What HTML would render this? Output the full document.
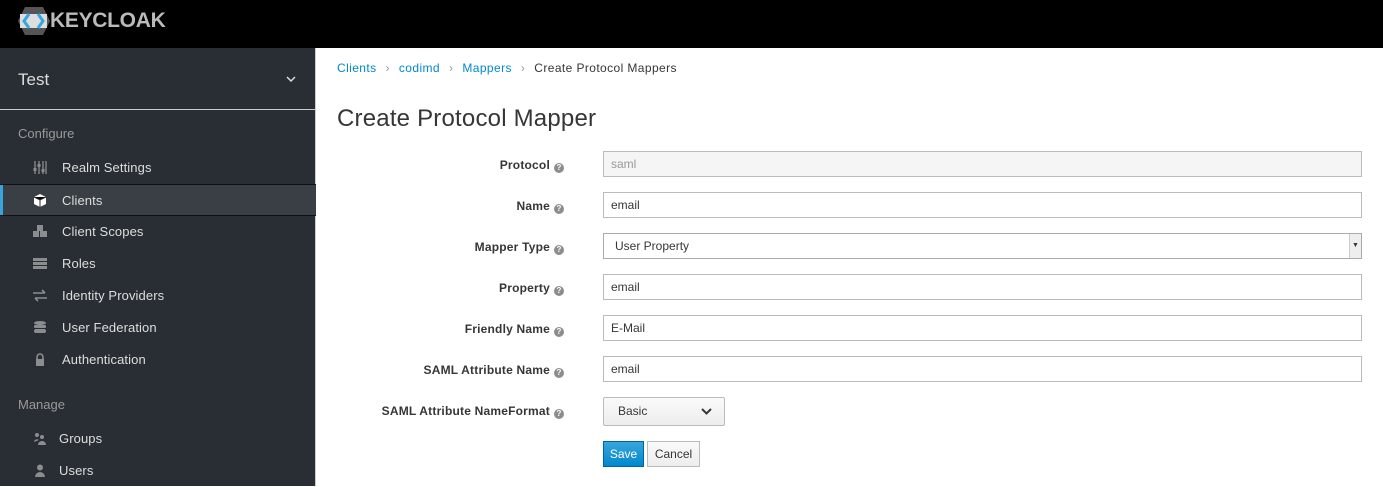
<!DOCTYPE html><html><head><style>
*{box-sizing:border-box;margin:0;padding:0}
body{width:1383px;height:486px;overflow:hidden;font-family:"Liberation Sans",sans-serif;background:#fff;position:relative}
.top{position:absolute;left:0;top:0;width:1383px;height:48px;background:#000}
.side{position:absolute;left:0;top:48px;width:316px;height:438px;background:#292e34;border-right:1px solid #ccc}
.side .realm{position:absolute;left:18px;top:22px;color:#ddd;font-size:17px}
.side .hr{position:absolute;left:0;top:61px;width:316px;height:1px;background:#ccc}
.sec{position:absolute;left:18px;color:#999;font-size:13px}
.it{position:absolute;left:0;width:316px;height:32px;color:#ddd;font-size:13px;line-height:32px;padding-left:62px;letter-spacing:0.1px}
.it.act{background:#393f44;border-top:1px solid #111;border-bottom:1px solid #111}
.it.act:before{content:"";position:absolute;left:0;top:0;width:3px;height:100%;background:#39a5dc}
.ic{position:absolute;left:33px;top:9px;width:14px;height:13px}
.bc{position:absolute;left:337px;top:61px;font-size:12px;color:#363636;letter-spacing:0.4px}
.bc a{color:#0088ce}
.bc span{color:#999;margin:0 9px}
h1{position:absolute;left:337px;top:105px;font-weight:300;font-size:24px;color:#363636;letter-spacing:0.2px}
.lab{position:absolute;right:819px;font-size:12px;font-weight:bold;color:#363636;text-align:right;white-space:nowrap;letter-spacing:0.2px}
.q{display:inline-block;width:10px;height:10px;border-radius:50%;background:#8b8d8f;color:#fff;font-size:8px;line-height:10px;text-align:center;margin-left:4px;vertical-align:-1px;letter-spacing:0}
.in{position:absolute;left:603px;width:759px;height:26px;border:1px solid #bbb;font-size:12px;line-height:24px;padding-left:7px;color:#363636}
</style></head><body>
<div class="top">
<svg style="position:absolute;left:17px;top:6px" width="34" height="30" viewBox="0 0 34 30"><polygon points="8,1 26,1 33,15 26,29 8,29 1,15" fill="#555"/><polygon points="3,8 30,8 30,22 3,22" fill="#ddd"/><path d="M12 8 L7 15 L12 22 M21 8 L26 15 L21 22" stroke="#33a8e0" stroke-width="3" fill="none"/></svg>
<div style="position:absolute;left:50px;top:9px;color:#bbb;font-weight:bold;font-size:21px;letter-spacing:-0.3px">KEYCLOAK</div>
</div>
<div class="side">
<div class="realm">Test</div>
<svg style="position:absolute;left:286px;top:28px" width="10" height="7"><path d="M1 1L5 5L9 1" stroke="#ddd" stroke-width="1.5" fill="none"/></svg>
<div class="hr"></div>
<div class="sec" style="top:78px">Configure</div>
<div class="it" style="top:104px"><svg class="ic" viewBox="0 0 14 13"><path d="M2 0v13M6 0v13M10 0v13M13 0v13" stroke="#8b8d8f" stroke-width="1.3"/><rect x="0.5" y="7" width="3" height="3" fill="#8b8d8f"/><rect x="4.5" y="3" width="3" height="3" fill="#8b8d8f"/><rect x="8.5" y="8" width="3" height="3" fill="#8b8d8f"/></svg>Realm Settings</div>
<div class="it act" style="top:136px"><svg class="ic" viewBox="0 0 14 13"><polygon points="7,0 13,3 13,10 7,13 1,10 1,3" fill="#fff"/><path d="M1 3L7 6L13 3M7 6V13" stroke="#292e34" stroke-width="1"/></svg>Clients</div>
<div class="it" style="top:168px"><svg class="ic" viewBox="0 0 14 13"><rect x="4" y="0" width="6" height="6" fill="#8b8d8f"/><rect x="0" y="6" width="6" height="6" fill="#8b8d8f"/><rect x="7" y="6" width="7" height="6" fill="#8b8d8f"/></svg>Client Scopes</div>
<div class="it" style="top:200px"><svg class="ic" viewBox="0 0 14 13"><rect y="1" width="14" height="3" fill="#8b8d8f"/><rect y="5" width="14" height="3" fill="#8b8d8f"/><rect y="9" width="14" height="3" fill="#8b8d8f"/></svg>Roles</div>
<div class="it" style="top:232px"><svg class="ic" viewBox="0 0 14 13"><path d="M0 4H12M9 1L12 4M14 9H2M5 12L2 9" stroke="#8b8d8f" stroke-width="1.6" fill="none"/></svg>Identity Providers</div>
<div class="it" style="top:264px"><svg class="ic" viewBox="0 0 14 13"><ellipse cx="7" cy="2" rx="6" ry="2" fill="#8b8d8f"/><rect x="1" y="4" width="12" height="3" rx="1" fill="#8b8d8f"/><rect x="1" y="8" width="12" height="4" rx="2" fill="#8b8d8f"/></svg>User Federation</div>
<div class="it" style="top:296px"><svg class="ic" viewBox="0 0 14 13"><path d="M4 6V4a3 3 0 0 1 6 0v2" stroke="#8b8d8f" stroke-width="1.6" fill="none"/><rect x="3" y="6" width="8" height="7" fill="#8b8d8f"/></svg>Authentication</div>
<div class="sec" style="top:349px">Manage</div>
<div class="it" style="top:375px;padding-left:59px"><svg class="ic" viewBox="0 0 14 13"><circle cx="4" cy="3" r="2" fill="#8b8d8f"/><circle cx="9" cy="5" r="2" fill="#8b8d8f"/><path d="M1 10a3 3 0 0 1 5-2M5 13a4 4 0 0 1 8 0z" fill="#8b8d8f"/></svg>Groups</div>
<div class="it" style="top:407px;padding-left:59px"><svg class="ic" viewBox="0 0 14 13"><circle cx="7" cy="3.5" r="3" fill="#8b8d8f"/><path d="M2 13a5 5 0 0 1 10 0z" fill="#8b8d8f"/></svg>Users</div>
</div>
<div class="bc"><a>Clients</a><span>›</span><a>codimd</a><span>›</span><a>Mappers</a><span>›</span>Create Protocol Mappers</div>
<h1>Create Protocol Mapper</h1>
<div class="lab" style="top:158px">Protocol<span class="q">?</span></div>
<div class="in" style="top:151px;background:#f5f5f5;color:#999">saml</div>
<div class="lab" style="top:199px">Name<span class="q">?</span></div>
<div class="in" style="top:192px">email</div>
<div class="lab" style="top:240px">Mapper Type<span class="q">?</span></div>
<div class="in" style="top:233px;padding-left:11px;border-color:#aaa">User Property<div style="position:absolute;right:0;top:0;width:12px;height:24px;background:#eee;border-left:1px solid #ccc;font-size:7px;line-height:24px;text-align:center">▼</div></div>
<div class="lab" style="top:281px">Property<span class="q">?</span></div>
<div class="in" style="top:274px">email</div>
<div class="lab" style="top:322px">Friendly Name<span class="q">?</span></div>
<div class="in" style="top:315px">E-Mail</div>
<div class="lab" style="top:363px">SAML Attribute Name<span class="q">?</span></div>
<div class="in" style="top:356px">email</div>
<div class="lab" style="top:404px">SAML Attribute NameFormat<span class="q">?</span></div>
<div style="position:absolute;left:603px;top:397px;width:122px;height:29px;border:1px solid #bbb;border-radius:2px;background:linear-gradient(#fafafa,#ededed);font-size:12px;line-height:27px;padding-left:14px;color:#363636">Basic<svg style="position:absolute;right:12px;top:10px" width="11" height="7"><path d="M1 1L5.5 5.5L10 1" stroke="#363636" stroke-width="2" fill="none"/></svg></div>
<div style="position:absolute;left:603px;top:441px;width:41px;height:26px;background:linear-gradient(#39a5dc,#0088ce);border:1px solid #00659c;color:#fff;font-size:12px;line-height:24px;text-align:center">Save</div>
<div style="position:absolute;left:647px;top:441px;width:53px;height:26px;background:linear-gradient(#fafafa,#ededed);border:1px solid #bbb;color:#363636;font-size:12px;line-height:24px;text-align:center">Cancel</div>
</body></html>
